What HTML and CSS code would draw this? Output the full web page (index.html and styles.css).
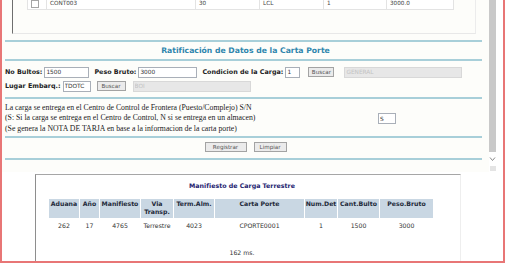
FILE: index.html
```html
<!DOCTYPE html>
<html lang="es">
<head>
    <meta charset="UTF-8">
    <title>Ratificación de Datos de la Carta Porte</title>
    <link rel="stylesheet" href="styles.css">
</head>
<body>
<div class="page">

    <!-- Marco superior (ratificacion) con su barra de desplazamiento -->
    <div class="frame">
        <div class="frame-body">
            <div class="cont-box">
                <table class="cont-table">
                    <tr>
                        <td class="c-check"><span class="checkbox"></span></td>
                        <td class="c-cont">CONT003</td>
                        <td class="c-bultos">30</td>
                        <td class="c-tipo">LCL</td>
                        <td class="c-det">1</td>
                        <td class="c-peso">3000.0</td>
                    </tr>
                </table>
            </div>

            <div class="rule"></div>
            <h2 class="sect-title">Ratificación de Datos de la Carta Porte</h2>
            <div class="rule"></div>

            <div class="form-row first">
                <label>No Bultos:</label>
                <input type="text" class="in-bultos" value="1500">
                <label class="gap">Peso Bruto:</label>
                <input type="text" class="in-peso" value="3000">
                <label class="gap">Condicion de la Carga:</label>
                <input type="text" class="in-cond" value="1">
                <button class="btn btn-buscar">Buscar</button>
                <input type="text" class="in-desc in-general" value="GENERAL" disabled>
            </div>
            <div class="form-row">
                <label>Lugar Embarq.:</label>
                <input type="text" class="in-lugar" value="TDOTC">
                <button class="btn btn-buscar2">Buscar</button>
                <input type="text" class="in-desc in-boi" value="BOI" disabled>
            </div>

            <div class="rule"></div>

            <div class="note">
                <div class="note-text">
                    La carga se entrega en el Centro de Control de Frontera (Puesto/Complejo) S/N<br>
                    (S: Si la carga se entrega en el Centro de Control, N si se entrega en un almacen)<br>
                    (Se genera la NOTA DE TARJA en base a la informacion de la carta porte)
                </div>
                <input type="text" class="in-sn" value="S">
            </div>

            <div class="rule"></div>
            <div class="actions">
                <button class="btn btn-registrar">Registrar</button>
                <button class="btn btn-limpiar">Limpiar</button>
            </div>
            <div class="rule"></div>
        </div>

        <div class="vscroll">
            <div class="vscroll-thumb"></div>
            <svg class="vscroll-arrow" width="7" height="6" viewBox="0 0 7 6">
                <polyline points="1,1.5 3.5,4.5 6,1.5" fill="none" stroke="#8a8a8a" stroke-width="1"/>
            </svg>
            <div class="vscroll-end"></div>
        </div>
        <div class="frame-edge"></div>
    </div>

    <!-- Resultado: manifiesto de carga -->
    <div class="result">
        <div class="result-box">
            <div class="report">
                <h3 class="report-title">Manifiesto de Carga Terrestre</h3>
                <table class="manif">
                    <tr>
                        <th class="w-aduana">Aduana</th>
                        <th class="w-anio">Año</th>
                        <th class="w-manif">Manifiesto</th>
                        <th class="w-via">Via<br>Transp.</th>
                        <th class="w-term">Term.Alm.</th>
                        <th class="w-carta">Carta Porte</th>
                        <th class="w-numdet">Num.Det</th>
                        <th class="w-cant">Cant.Bulto</th>
                        <th class="w-peso">Peso.Bruto</th>
                    </tr>
                    <tr>
                        <td>262</td>
                        <td>17</td>
                        <td>4765</td>
                        <td>Terrestre</td>
                        <td>4023</td>
                        <td>CPORTE0001</td>
                        <td>1</td>
                        <td>1500</td>
                        <td>3000</td>
                    </tr>
                </table>
                <p class="timing">162 ms.</p>
            </div>
        </div>
    </div>

</div>
</body>
</html>
```

FILE: styles.css
```css
/* Base */
html, body {
    margin: 0;
    padding: 0;
    background: #ffffff;
}

body {
    font-family: "DejaVu Sans", Verdana, sans-serif;
    color: #222;
}

/* Outer window with red frame */
.page {
    width: 501px;
    height: 261px;
    border: 2px solid #e87676;
    border-top: none;
    overflow: hidden;
    background: #fff;
}

/* Upper frame */
.frame {
    display: flex;
    height: 172px;
    overflow: hidden;
}

.frame-body {
    width: 487px;
    background: #fdfdfa;
    overflow: hidden;
}

.frame-edge {
    width: 7px;
    background: #fff;
}

/* Scrollbar */
.vscroll {
    width: 7px;
    display: flex;
    flex-direction: column;
    align-items: center;
    background: #fff;
}

.vscroll-thumb {
    width: 7px;
    height: 152px;
    background: #c9c9c9;
}

.vscroll-arrow {
    margin-top: 4px;
}

.vscroll-end {
    width: 6px;
    height: 5px;
    margin-top: 4px;
    background: #e4e4e4;
}

/* Container list (cut at the top) */
.cont-box {
    margin: -4px 13px 0 10px;
    height: 37px;
    border-left: 1px solid #6e6e6e;
    border-right: 1px solid #ececec;
    border-bottom: 1px solid #e8e8e8;
    padding-left: 14px;
}

.cont-table {
    border-collapse: collapse;
    font-size: 5.7px;
    color: #444;
    background: #fff;
}

.cont-table td {
    height: 12px;
    padding: 0 3px;
    border: 1px solid #e3e3e3;
    vertical-align: middle;
}

.c-check { width: 12px; }
.c-cont { width: 142px; }
.c-bultos { width: 57px; }
.c-tipo { width: 57px; }
.c-det { width: 56px; }
.c-peso { width: 60px; }

.checkbox {
    display: block;
    width: 6px;
    height: 6px;
    margin-left: 0;
    margin-top: 1px;
    border: 1px solid #a5a5a5;
    background: #fff;
}

/* Teal separators */
.rule {
    height: 2px;
    margin: 0 7px 0 3px;
    background: #a8cfd9;
}

.cont-box + .rule {
    margin-top: 6px;
}

.sect-title {
    margin: 0;
    height: 17px;
    line-height: 17px;
    text-align: center;
    font-size: 7.7px;
    font-weight: bold;
    color: #2f86ad;
}

/* Form rows */
.form-row {
    display: flex;
    align-items: center;
    height: 14px;
    padding-left: 3px;
}

.form-row.first {
    margin-top: 4px;
}

.form-row + .rule {
    margin-top: 4px;
}

.form-row label {
    font-size: 6.4px;
    font-weight: bold;
    color: #222;
    margin-right: 2px;
    white-space: nowrap;
}

.form-row label.gap {
    margin-left: 5px;
}

input[type="text"] {
    box-sizing: border-box;
    height: 11px;
    margin: 0;
    padding: 0 1px;
    border: 1px solid #a9afb8;
    background: #fff;
    font-family: "DejaVu Sans", Verdana, sans-serif;
    font-size: 5.8px;
    color: #333;
    outline: none;
}

input[type="text"]:disabled {
    background: #e7e7e7;
    border-color: #d8d8d8;
    color: #c3c3c3;
}

.in-bultos { width: 45px; }
.in-peso { width: 59px; }
.in-cond { width: 15px; }
.in-lugar { width: 28px; }
.in-general { width: 118px; margin-left: 10px !important; }
.in-boi { width: 118px; margin-left: 7px !important; }
.in-sn { width: 18px; height: 10px; }

/* Buttons */
.btn {
    box-sizing: border-box;
    height: 10px;
    margin: 0;
    padding: 0;
    border: 1px solid #a3a3a3;
    background: #ebebeb;
    font-family: "DejaVu Sans", Verdana, sans-serif;
    font-size: 5.6px;
    color: #555;
    line-height: 8px;
}

.btn-buscar { width: 26px; margin-left: 8px; }
.btn-buscar2 { width: 29px; margin-left: 6px; }
.btn-registrar { width: 42px; }
.btn-limpiar { width: 33px; margin-left: 7px; }

/* Note with S/N field */
.note {
    display: flex;
    align-items: center;
    padding: 2px 0 0 3px;
    height: 35px;
}

.note-text {
    width: 373px;
    font-family: "Liberation Serif", "Times New Roman", serif;
    font-size: 7.75px;
    line-height: 10.5px;
    color: #1a1a1a;
}

.note + .rule {
    margin-top: 0;
}

.actions {
    display: flex;
    justify-content: center;
    margin: 4px 0 6px;
}

/* Lower result area */
.result {
    padding: 2px 0 0 33px;
    background: #fff;
}

.result-box {
    width: 411px;
    height: 120px;
    border-top: 1px solid #a6a6a6;
    border-left: 1px solid #8e8e8e;
    border-right: 1px solid #eeeeee;
    padding-left: 13px;
}

.report {
    width: 386px;
    text-align: center;
}

.report-title {
    margin: 5px 0 7px;
    height: 12px;
    line-height: 12px;
    font-size: 6.3px;
    font-weight: bold;
    color: #24236f;
}

.manif {
    width: 386px;
    table-layout: fixed;
    border-collapse: separate;
    border-spacing: 1px 1px;
    margin: -1px -1px 0;
    font-size: 6.2px;
}

.manif th {
    height: 18px;
    padding: 1px 0 0;
    background: #c9d7e3;
    color: #1e2a3a;
    font-weight: bold;
    vertical-align: top;
    line-height: 7.5px;
}

.manif td {
    height: 12px;
    padding: 0;
    color: #333;
    text-align: center;
}

.w-aduana { width: 30px; }
.w-anio { width: 19px; }
.w-manif { width: 40px; }
.w-via { width: 32px; }
.w-term { width: 40px; }
.w-carta { width: 89px; }
.w-numdet { width: 32px; }
.w-cant { width: 41px; }
.w-peso { width: 53px; }

.timing {
    margin: 15px 0 0;
    line-height: 12px;
    font-size: 6.2px;
    color: #333;
}
```
